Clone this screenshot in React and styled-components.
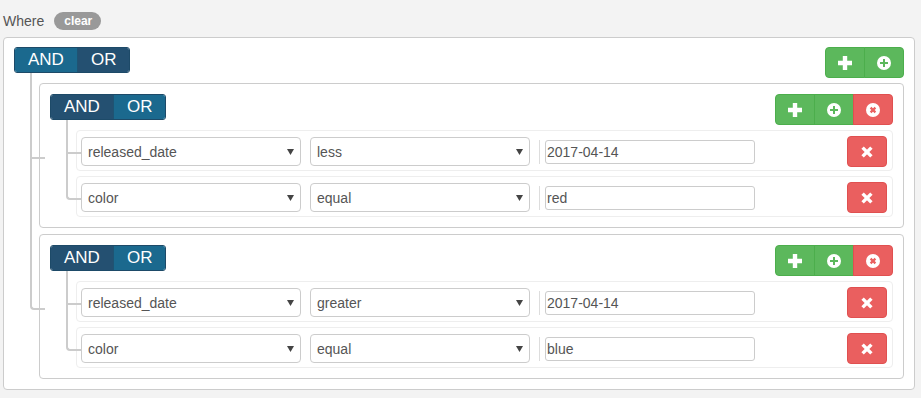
import React from "react";
import styled, { createGlobalStyle, css } from "styled-components";

const GlobalStyle = createGlobalStyle`
  html, body { margin: 0; padding: 0; background: #f3f3f3; }
  body { font-family: "Liberation Sans", Arial, sans-serif; font-size: 14px; color: #555; }
  * { box-sizing: border-box; }
`;

const Page = styled.div`
  padding: 11px 6px 9px 3px;
`;

const WhereRow = styled.div`
  display: flex;
  align-items: center;
  gap: 10px;
  height: 20px;
  margin-bottom: 6px;
  font-size: 14px;
  color: #555;
`;

const ClearBadge = styled.span`
  display: inline-flex;
  align-items: center;
  justify-content: center;
  height: 18px;
  padding: 0 9px 0 10px;
  border-radius: 9px;
  background: #999;
  color: #fff;
  font-weight: bold;
  font-size: 12px;
`;

const Panel = styled.div`
  width: 912px;
  background: #fff;
  border: 1px solid #ccc;
  border-radius: 4px;
  padding: 9px 10px 10px;
`;

const Group = styled.div`
  background: #fff;
  border: 1px solid #ccc;
  border-radius: 4px;
  padding: 10px;
`;

const GroupHeader = styled.div`
  display: flex;
  justify-content: space-between;
  align-items: flex-start;
`;

const Conditions = styled.div`
  display: flex;
  border: 1px solid #1d4a68;
  border-radius: 3px;
  overflow: hidden;
  height: 26px;
`;

const CondButton = styled.span`
  display: flex;
  align-items: center;
  padding: 0 ${(p) => p.$pad}px;
  font-size: 17px;
  color: #fff;
  background: ${(p) => (p.$dark ? "#245071" : "#1b698e")};
  & + & { border-left: 1px solid #1f5473; }
`;

const BtnGroup = styled.div`
  display: flex;
  height: 31px;
`;

const ActionButton = styled.button`
  width: 40px;
  height: 31px;
  display: flex;
  align-items: center;
  justify-content: center;
  padding: 0;
  margin: 0;
  cursor: pointer;
  border: 1px solid ${(p) => (p.$danger ? "#e05050" : "#4cae4c")};
  background: ${(p) => (p.$danger ? "#ea5f5f" : "#5cb85c")};
  border-radius: 0;
  &:first-child { border-top-left-radius: 4px; border-bottom-left-radius: 4px; }
  &:last-child { border-top-right-radius: 4px; border-bottom-right-radius: 4px; }
  & + & { margin-left: -1px; }
`;

const RulesList = styled.ul`
  list-style: none;
  margin: 5px 0 0;
  padding: 0 0 0 ${(p) => p.$indent}px;
  display: flex;
  flex-direction: column;
  gap: ${(p) => p.$gap}px;
`;

const connectorLine = css`
  &::before,
  &::after {
    content: "";
    position: absolute;
    left: ${(p) => -(p.$indent - 16)}px;
    border-color: #ccc;
    border-style: solid;
    z-index: 1;
  }
  &::before {
    width: ${(p) => p.$indent - 12}px;
    top: ${(p) => (p.$first ? "-10px" : "0")};
    height: ${(p) => (p.$first ? "calc(50% + 11px)" : "calc(50% + 1px)")};
    border-width: 0 0 2px 2px;
    border-bottom-left-radius: ${(p) => (p.$last ? "4px" : "0")};
  }
  &::after {
    display: ${(p) => (p.$last ? "none" : "block")};
    top: 50%;
    height: calc(50% + ${(p) => p.$gap}px);
    border-width: 0 0 0 2px;
  }
`;

const Item = styled.li`
  position: relative;
  ${connectorLine}
`;

const RuleRow = styled.div`
  display: flex;
  align-items: center;
  height: 41px;
  padding: 5px 5px 3px 4px;
  border: 1px solid #eee;
  border-radius: 4px;
  background: #fff;
`;

const SelectBox = styled.div`
  position: relative;
  display: flex;
  align-items: center;
  justify-content: space-between;
  width: 220px;
  height: 29px;
  padding: 0 6px 0 6px;
  margin-right: 9px;
  border: 1px solid #ccc;
  border-radius: 4px;
  background: #fff;
  font-size: 14px;
  color: #555;
`;

const ValueBox = styled.div`
  display: flex;
  align-items: center;
  height: 24px;
  padding-left: 5px;
  border-left: 1px solid #ddd;
`;

const ValueInput = styled.input`
  width: 210px;
  height: 24px;
  padding: 0 1px;
  border: 1px solid #ccc;
  border-radius: 3px;
  font-family: "Liberation Sans", Arial, sans-serif;
  font-size: 14px;
  color: #555;
  outline: none;
`;

const RuleActions = styled.div`
  margin-left: auto;
  display: flex;
`;

const Arrow = () => (
  <svg width="7" height="6" viewBox="0 0 7 6">
    <path d="M0 0h7L3.5 6z" fill="#444" />
  </svg>
);

const PlusIcon = () => (
  <svg width="14" height="14" viewBox="0 0 14 14">
    <path d="M4.8 0h4.4v4.8H14v4.4H9.2V14H4.8V9.2H0V4.8h4.8z" fill="#fff" />
  </svg>
);

const PlusSignIcon = () => (
  <svg width="14" height="14" viewBox="0 0 14 14">
    <circle cx="7" cy="7" r="7" fill="#fff" />
    <path d="M6 3h2v3h3v2H8v3H6V8H3V6h3z" fill="#5cb85c" />
  </svg>
);

const RemoveSignIcon = () => (
  <svg width="14" height="14" viewBox="0 0 14 14">
    <circle cx="7" cy="7" r="7" fill="#fff" />
    <path d="M4.6 4.6l4.8 4.8M9.4 4.6l-4.8 4.8" stroke="#ea5f5f" strokeWidth="2.2" />
  </svg>
);

const RemoveIcon = () => (
  <svg width="12" height="12" viewBox="0 0 12 12">
    <path d="M1.6 1.6l8.8 8.8M10.4 1.6l-8.8 8.8" stroke="#fff" strokeWidth="3.4" />
  </svg>
);

const AndOr = ({ andDark }) => (
  <Conditions>
    <CondButton $dark={andDark} $pad={13}>AND</CondButton>
    <CondButton $dark={!andDark} $pad={13}>OR</CondButton>
  </Conditions>
);

const Rule = ({ field, op, value }) => (
  <RuleRow>
    <SelectBox>
      <span>{field}</span>
      <Arrow />
    </SelectBox>
    <SelectBox>
      <span>{op}</span>
      <Arrow />
    </SelectBox>
    <ValueBox>
      <ValueInput defaultValue={value} readOnly />
    </ValueBox>
    <RuleActions>
      <ActionButton $danger>
        <RemoveIcon />
      </ActionButton>
    </RuleActions>
  </RuleRow>
);

const SubGroup = ({ rules }) => (
  <Group>
    <GroupHeader>
      <AndOr andDark />
      <BtnGroup>
        <ActionButton>
          <PlusIcon />
        </ActionButton>
        <ActionButton>
          <PlusSignIcon />
        </ActionButton>
        <ActionButton $danger>
          <RemoveSignIcon />
        </ActionButton>
      </BtnGroup>
    </GroupHeader>
    <RulesList $indent={26} $gap={5}>
      {rules.map((r, i) => (
        <Item
          key={i}
          $indent={26}
          $gap={5}
          $first={i === 0}
          $last={i === rules.length - 1}
        >
          <Rule {...r} />
        </Item>
      ))}
    </RulesList>
  </Group>
);

const groups = [
  [
    { field: "released_date", op: "less", value: "2017-04-14" },
    { field: "color", op: "equal", value: "red" },
  ],
  [
    { field: "released_date", op: "greater", value: "2017-04-14" },
    { field: "color", op: "equal", value: "blue" },
  ],
];

export default function App() {
  return (
    <>
      <GlobalStyle />
      <Page>
        <WhereRow>
          <span>Where</span>
          <ClearBadge>clear</ClearBadge>
        </WhereRow>
        <Panel>
          <GroupHeader>
            <AndOr andDark={false} />
            <BtnGroup>
              <ActionButton>
                <PlusIcon />
              </ActionButton>
              <ActionButton>
                <PlusSignIcon />
              </ActionButton>
            </BtnGroup>
          </GroupHeader>
          <RulesList $indent={25} $gap={6}>
            {groups.map((rules, i) => (
              <Item
                key={i}
                $indent={25}
                $gap={6}
                $first={i === 0}
                $last={i === groups.length - 1}
              >
                <SubGroup rules={rules} />
              </Item>
            ))}
          </RulesList>
        </Panel>
      </Page>
    </>
  );
}
